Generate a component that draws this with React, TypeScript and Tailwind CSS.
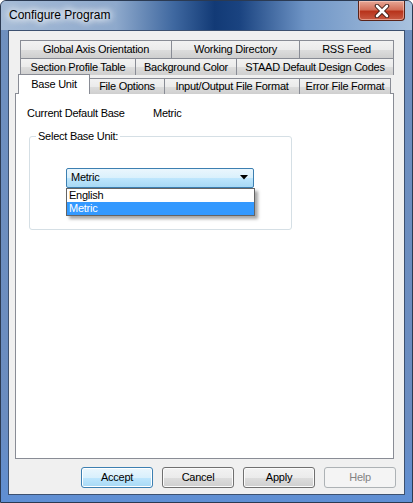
import React from "react";

const font = { fontFamily: '"Liberation Sans", Arial, sans-serif' };

type Tab = { label: string; width: number };

const row1: Tab[] = [
  { label: "Global Axis Orientation", width: 152 },
  { label: "Working Directory", width: 129 },
  { label: "RSS Feed", width: 95 },
];

const row2: Tab[] = [
  { label: "Section Profile Table", width: 116 },
  { label: "Background Color", width: 102 },
  { label: "STAAD Default Design Codes", width: 158 },
];

const row3: Tab[] = [
  { label: "File Options", width: 76 },
  { label: "Input/Output File Format", width: 136 },
  { label: "Error File Format", width: 92 },
];

function TabButton({ tab }: { tab: Tab }) {
  return (
    <div
      className="-ml-px flex h-full shrink-0 items-center justify-center border border-b-0 border-[#898c95] bg-[linear-gradient(180deg,#f2f2f2_0%,#ebebeb_50%,#dddddd_51%,#cfcfcf_100%)] text-[11px] text-black first:ml-0"
      style={{ width: tab.width }}
    >
      {tab.label}
    </div>
  );
}

function DialogButton({ label, primary, disabled }: { label: string; primary?: boolean; disabled?: boolean }) {
  const look = disabled
    ? "border-[#adb2b5] bg-[#f4f4f4] text-[#838383]"
    : primary
      ? "border-[#3c7fb1] bg-[linear-gradient(180deg,#eaf6fd_0%,#d9f0fc_50%,#bee6fd_51%,#a7d9f5_100%)] text-black shadow-[inset_0_0_0_1px_#fff]"
      : "border-[#707070] bg-[linear-gradient(180deg,#f2f2f2_0%,#ebebeb_50%,#dddddd_51%,#cfcfcf_100%)] text-black shadow-[inset_0_0_0_1px_#fbfbfb]";
  return (
    <button
      type="button"
      className={`flex h-[21px] w-[72px] items-center justify-center rounded-[3px] border text-[11px] ${look}`}
    >
      {label}
    </button>
  );
}

export default function App() {
  return (
    <div
      className="flex h-[503px] w-[413px] flex-col overflow-hidden rounded-t-[6px] border border-[#2b3a52] bg-[linear-gradient(180deg,#6f90bf_0%,#6a8cc0_85%,#5f8fd4_100%)] tracking-[-0.25px]"
      style={font}
    >
      {/* title bar */}
      <div className="flex h-[29px] shrink-0 bg-[linear-gradient(90deg,#a6bcd7_0%,#8ea9cc_28%,#3f68a0_42%,#123a76_52%,#1a4380_58%,#6f95c6_74%,#a9c2de_100%)]">
        <div className="flex items-center pb-[1px] pl-[8px] text-[12px] tracking-normal text-black [text-shadow:0_0_6px_#fff,0_0_8px_#fff,0_0_10px_#fff]">
          Configure Program
        </div>
        <div className="ml-auto mr-[7px] flex h-[20px] w-[47px] items-center justify-center self-start rounded-b-[4px] border border-t-0 border-[#5a2318] bg-[linear-gradient(180deg,#e7a796_0%,#d3705a_45%,#b8341c_55%,#c85a43_100%)] shadow-[inset_0_0_0_1px_rgba(255,220,210,0.5)]">
          <svg width="16" height="14" viewBox="0 0 16 14">
            <path d="M3 2 L13 12 M13 2 L3 12" stroke="#3a1a14" strokeWidth="4.5" strokeLinecap="round" />
            <path d="M3 2 L13 12 M13 2 L3 12" stroke="#ffffff" strokeWidth="2.6" strokeLinecap="round" />
          </svg>
        </div>
      </div>

      {/* client area */}
      <div className="mx-[7px] flex min-h-0 flex-1 flex-col border border-[#3d5170] bg-[#f0f0f0]">
        {/* tabs */}
        <div className="flex flex-col pl-[9px] pr-[10px] pt-[9px]">
          <div className="flex h-[18px] pl-[2px]">
            {row1.map((t) => (
              <TabButton key={t.label} tab={t} />
            ))}
          </div>
          <div className="flex h-[17px] pl-[2px]">
            {row2.map((t) => (
              <TabButton key={t.label} tab={t} />
            ))}
          </div>
          <div className="relative z-10 flex h-[19px] items-end">
            <div className="flex h-[20px] w-[72px] shrink-0 items-start justify-center border border-b-0 border-[#898c95] bg-white pt-[1px] text-[11px] text-black">
              Base Unit
            </div>
            <div className="-ml-px flex h-[16px]">
              {row3.map((t) => (
                <TabButton key={t.label} tab={t} />
              ))}
            </div>
          </div>
        </div>

        {/* tab panel */}
        <div className="mx-[6px] -mt-px flex h-[366px] w-[379px] flex-col border border-[#898c95] bg-white text-[11px] text-black">
          <div className="flex pl-[11px] pt-[11px]">
            <span className="w-[126px]">Current Default Base</span>
            <span>Metric</span>
          </div>

          <div className="relative ml-[13px] mt-[14px] h-[94px] w-[263px] rounded-[3px] border border-[#d5dfe5]">
            <span className="absolute -top-[8px] left-[6px] bg-white px-[2px] leading-[14px]">Select Base Unit:</span>

            <div className="ml-[36px] mt-[31px] flex h-[20px] w-[188px] items-center justify-between rounded-[2px] border border-[#3c7fb1] bg-[linear-gradient(180deg,#eaf6fd_0%,#d9f0fc_50%,#bee6fd_51%,#a7d9f5_100%)] pl-[4px] pr-[5px]">
              <span>Metric</span>
              <svg width="8" height="5" viewBox="0 0 8 5">
                <path d="M0 0 H8 L4 4.5 Z" fill="#000" />
              </svg>
            </div>

            {/* opened list */}
            <div className="absolute left-[36px] top-[51px] z-20 flex w-[189px] flex-col border border-[#646464] bg-white shadow-[3px_3px_3px_rgba(0,0,0,0.35)]">
              <div className="flex h-[13px] items-center pl-[2px] leading-[13px]">English</div>
              <div className="flex h-[13px] items-center bg-[#3399ff] pl-[2px] leading-[13px] text-white">Metric</div>
            </div>
          </div>
        </div>

        {/* buttons */}
        <div className="mt-[8px] flex justify-end gap-[9px] pr-[8px]">
          <DialogButton label="Accept" primary />
          <DialogButton label="Cancel" />
          <DialogButton label="Apply" />
          <DialogButton label="Help" disabled />
        </div>
      </div>
      <div className="h-[7px] shrink-0" />
    </div>
  );
}
